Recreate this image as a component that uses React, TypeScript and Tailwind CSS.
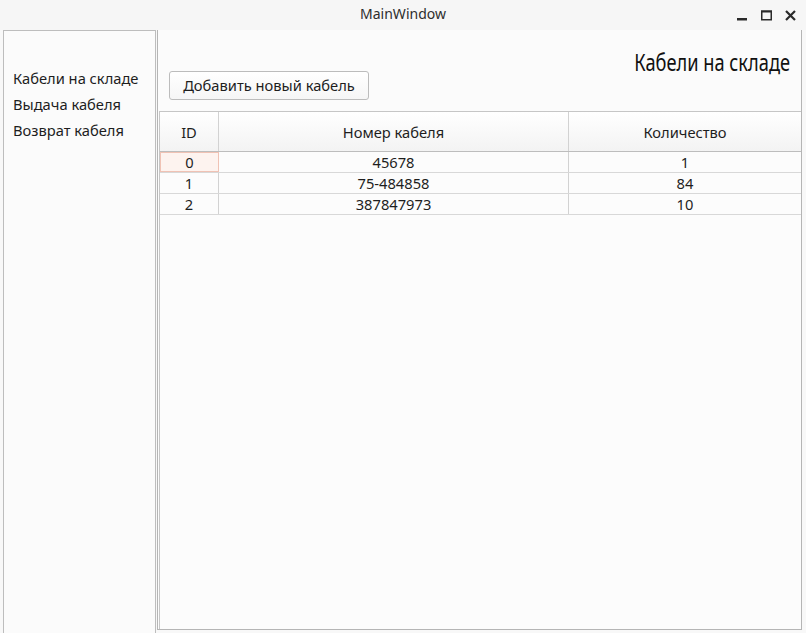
import React from "react";

interface CableRow {
  id: number;
  number: string;
  count: number;
}

const rows: CableRow[] = [
  { id: 0, number: "45678", count: 1 },
  { id: 1, number: "75-484858", count: 84 },
  { id: 2, number: "387847973", count: 10 },
];

const menu = ["Кабели на складе", "Выдача кабеля", "Возврат кабеля"];

function TitleBar() {
  return (
    <div className="relative h-[30px] flex items-center justify-center bg-[#f6f6f6]">
      <span className="text-[14px] leading-[20px] -mt-[2px] text-[#2e2e2e]">MainWindow</span>
      <div className="absolute right-[10px] top-0 h-[30px] flex items-center gap-[13px]">
        {/* minimize */}
        <svg width="11" height="11" viewBox="0 0 11 11">
          <rect x="0" y="8" width="10" height="2.5" fill="#2a2a2a" />
        </svg>
        {/* maximize */}
        <svg width="11" height="11" viewBox="0 0 11 11">
          <rect x="0.75" y="1.25" width="9.5" height="8.5" fill="none" stroke="#2a2a2a" strokeWidth="1.5" />
          <rect x="0" y="0.5" width="11" height="2" fill="#2a2a2a" />
        </svg>
        {/* close */}
        <svg width="11" height="11" viewBox="0 0 11 11">
          <path d="M1 1 L10 10 M10 1 L1 10" stroke="#2a2a2a" strokeWidth="2.2" />
        </svg>
      </div>
    </div>
  );
}

function Sidebar() {
  return (
    <div className="ml-[3px] w-[153px] border border-b-0 border-[#bdbdbd] bg-[#fbfbfb] pt-[34px] pl-[9px]">
      {menu.map((item) => (
        <div key={item} className="h-[26px] leading-[26px] text-[14.7px] text-[#1e1e1e]">
          {item}
        </div>
      ))}
    </div>
  );
}

function CableTable() {
  return (
    <div className="flex-1 ml-[1px] border-t border-l border-[#c6c6c6] bg-[#fcfcfc] text-[14.7px] text-[#1e1e1e]">
      <div className="flex h-[40px] pt-[2px] border-b border-[#bdbdbd] bg-gradient-to-b from-[#ffffff] to-[#f3f3f3]">
        <div className="w-[59px] flex items-center justify-center border-r border-[#d2d2d2] -mt-[2px] pt-[2px]">ID</div>
        <div className="w-[350px] flex items-center justify-center border-r border-[#d2d2d2] -mt-[2px] pt-[2px]">Номер кабеля</div>
        <div className="flex-1 flex items-center justify-center">Количество</div>
      </div>
      {rows.map((row, i) => (
        <div key={row.id} className="flex h-[21px] border-b border-[#d8d8d8] leading-[20px]">
          <div
            className={
              i === 0
                ? "w-[59px] text-center border border-[#f0c2b4] bg-[#fdf3ef] leading-[18px]"
                : "w-[59px] text-center border-r border-[#d2d2d2]"
            }
          >
            {row.id}
          </div>
          <div className="w-[350px] text-center border-r border-[#d2d2d2]">{row.number}</div>
          <div className="flex-1 text-center">{row.count}</div>
        </div>
      ))}
    </div>
  );
}

export default function App() {
  return (
    <div
      className="w-[806px] h-[633px] bg-[#f8f8f8] flex flex-col overflow-hidden"
      style={{ fontFamily: '"Noto Sans", "Open Sans", sans-serif' }}
    >
      <TitleBar />
      <div className="flex flex-1 min-h-0">
        <Sidebar />
        <div className="ml-[1px] w-[645px] mb-[3px] border-l border-r border-b border-[#b5b5b5] bg-[#fbfbfb] flex flex-col">
          <div className="h-[81px] flex flex-col">
            <div className="flex justify-end pr-[11px] pt-[17px]">
              <span className="text-[24px] leading-[30px] text-[#111] inline-block scale-x-[0.76] origin-right">
                Кабели на складе
              </span>
            </div>
            <div className="pl-[11px] -mt-[6px]">
              <button className="h-[29px] w-[200px] rounded-[3px] border border-[#bcbcbc] bg-gradient-to-b from-[#ffffff] to-[#f6f6f6] text-[14.7px] text-[#1e1e1e]">
                Добавить новый кабель
              </button>
            </div>
          </div>
          <div className="flex flex-1">
            <CableTable />
          </div>
        </div>
      </div>
    </div>
  );
}
